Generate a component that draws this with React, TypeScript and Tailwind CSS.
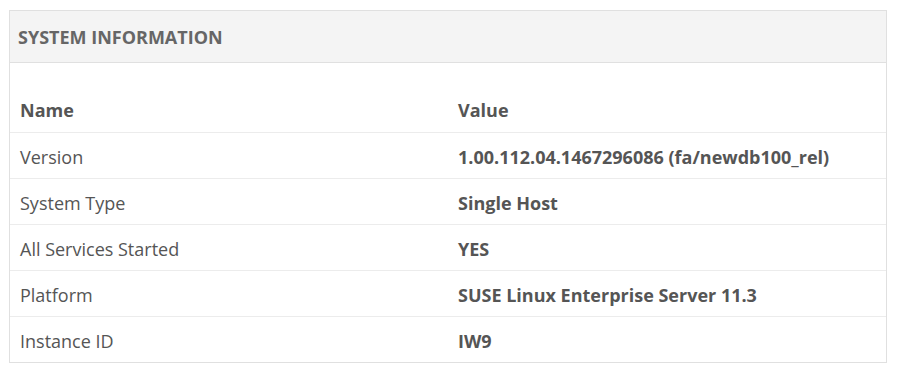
const rows: [string, string][] = [
  ['Version', '1.00.112.04.1467296086 (fa/newdb100_rel)'],
  ['System Type', 'Single Host'],
  ['All Services Started', 'YES'],
  ['Platform', 'SUSE Linux Enterprise Server 11.3'],
  ['Instance ID', 'IW9'],
]

export default function App() {
  return (
    <div className="min-h-[381px] bg-white pt-[10px] pl-[9px] font-['Open_Sans',sans-serif]">
      <div className="w-[878px] border border-[#e0e0e0] bg-white">
        <div className="h-[52px] flex items-center px-[8px] pt-[2px] bg-[#f4f4f4] border-b border-[#e0e0e0]">
          <h2 className="text-[18px] font-bold text-[#666] uppercase">System Information</h2>
        </div>
        <div className="pt-[23px]">
          <table className="w-full table-fixed text-[18px] text-[#555] border-collapse">
            <thead>
              <tr className="h-[46px]">
                <th className="w-1/2 px-[10px] pt-[4px] text-left font-bold">Name</th>
                <th className="w-1/2 px-[10px] pt-[4px] text-left font-bold">Value</th>
              </tr>
            </thead>
            <tbody>
              {rows.map(([name, value]) => (
                <tr key={name} className="h-[46px] border-t border-[#ececec]">
                  <td className="px-[10px] pt-[4px]">{name}</td>
                  <td className="px-[10px] pt-[4px] font-bold">{value}</td>
                </tr>
              ))}
            </tbody>
          </table>
        </div>
      </div>
    </div>
  )
}
